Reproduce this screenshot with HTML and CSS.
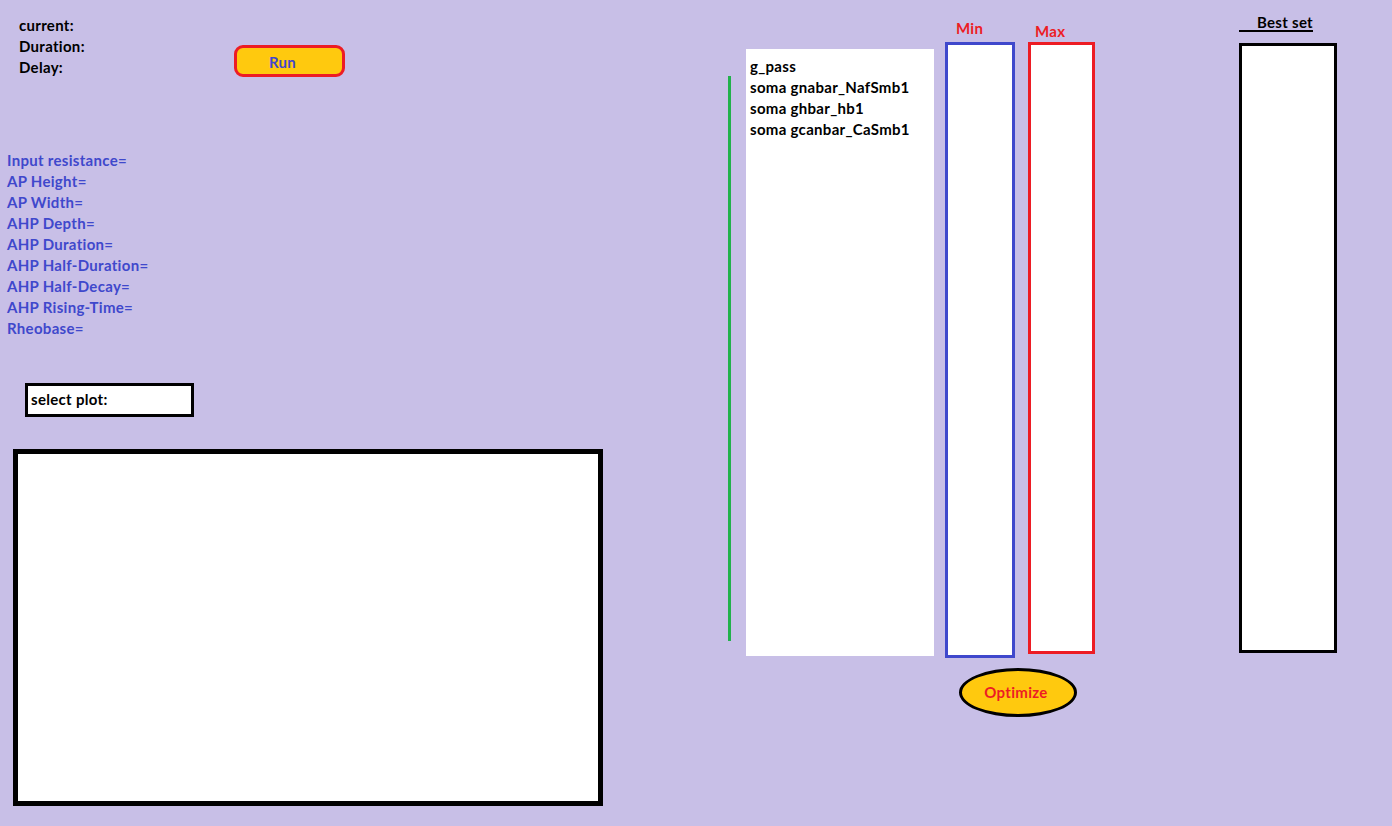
FILE: index.html
```html
<!DOCTYPE html>
<html>
<head>
<meta charset="utf-8">
<link rel="stylesheet" href="styles.css">
</head>
<body>
<div class="page">
  <div class="left">
    <div class="controls">
      <div class="params">
        <div>current:</div>
        <div>Duration:</div>
        <div>Delay:</div>
      </div>
      <button class="run">Run</button>
    </div>
    <div class="metrics">
      <div>Input resistance=</div>
      <div>AP Height=</div>
      <div>AP Width=</div>
      <div>AHP Depth=</div>
      <div>AHP Duration=</div>
      <div>AHP Half-Duration=</div>
      <div>AHP Half-Decay=</div>
      <div>AHP Rising-Time=</div>
      <div>Rheobase=</div>
    </div>
    <div class="select">select plot:</div>
    <div class="plot"></div>
  </div>
  <div class="green"></div>
  <div class="list">
    <div>g_pass</div>
    <div>soma gnabar_NafSmb1</div>
    <div>soma ghbar_hb1</div>
    <div>soma gcanbar_CaSmb1</div>
  </div>
  <div class="ranges">
    <div class="range-cols">
      <div class="col col-min">
        <div class="label label-min">Min</div>
        <div class="box box-min"></div>
      </div>
      <div class="col col-max">
        <div class="label label-max">Max</div>
        <div class="box box-max"></div>
      </div>
    </div>
    <button class="optimize">Optimize</button>
  </div>
  <div class="best">
    <div class="best-label"><span>Best set</span></div>
    <div class="best-box"></div>
  </div>
</div>
</body>
</html>
```

FILE: styles.css
```css
html, body {
  margin: 0;
  padding: 0;
}
body {
  background: #c8bfe7;
  width: 1392px;
  height: 826px;
  overflow: hidden;
  font-family: Lato, "Open Sans", sans-serif;
  font-weight: bold;
  font-size: 15px;
  letter-spacing: 0.3px;
  color: #000;
}
.page {
  display: flex;
  align-items: flex-start;
}
.left {
  width: 728px;
  flex: none;
}
.controls {
  display: flex;
  align-items: flex-start;
  padding: 15px 0 0 19px;
}
.params {
  width: 215px;
  line-height: 21px;
}
.run {
  margin-top: 30px;
  width: 111px;
  height: 32px;
  box-sizing: border-box;
  background: #ffc90e;
  border: 3px solid #ed1c24;
  border-radius: 9px;
  color: #3f48cc;
  font: inherit;
  letter-spacing: inherit;
  padding: 2px 14px 0 0;
}
.metrics {
  margin: 72px 0 0 7px;
  line-height: 21px;
  color: #3f48cc;
}
.select {
  margin: 44px 0 0 25px;
  width: 169px;
  height: 34px;
  box-sizing: border-box;
  border: 3px solid #000;
  background: #fff;
  padding: 3px 0 0 3px;
  line-height: 21px;
}
.plot {
  margin: 32px 0 0 13px;
  width: 590px;
  height: 357px;
  box-sizing: border-box;
  border: 5px solid #000;
  background: #fff;
}
.green {
  flex: none;
  margin-top: 76px;
  width: 3px;
  height: 565px;
  background: #22b14c;
}
.list {
  flex: none;
  margin: 49px 0 0 15px;
  width: 188px;
  height: 607px;
  box-sizing: border-box;
  background: #fff;
  padding: 7px 0 0 4px;
  line-height: 21px;
}
.ranges {
  flex: none;
  margin-left: 11px;
  display: flex;
  flex-direction: column;
  align-items: flex-start;
}
.range-cols {
  display: flex;
  align-items: flex-start;
}
.col {
  display: flex;
  flex-direction: column;
}
.label {
  color: #ed1c24;
  line-height: 20px;
  height: 24px;
}
.label-min {
  padding: 18px 0 0 11px;
}
.label-max {
  padding: 21px 0 0 7px;
  height: 21px;
}
.box {
  box-sizing: border-box;
  background: #fff;
}
.box-min {
  width: 70px;
  height: 616px;
  border: 3px solid #3f48cc;
}
.col-max {
  margin-left: 13px;
}
.box-max {
  width: 67px;
  height: 612px;
  border: 3px solid #ed1c24;
}
.optimize {
  margin: 10px 0 0 14px;
  width: 118px;
  height: 49px;
  box-sizing: border-box;
  border: 3px solid #000;
  border-radius: 50%;
  background: #ffc90e;
  color: #ed1c24;
  font: inherit;
  letter-spacing: inherit;
  padding: 0 4px 2px 0;
}
.best {
  flex: none;
  margin: 13px 0 0 144px;
  display: flex;
  flex-direction: column;
}
.best-label {
  width: 74px;
  height: 19px;
  box-sizing: border-box;
  border-bottom: 2px solid #000;
  text-align: right;
  line-height: 18px;
  margin-bottom: 11px;
}
.best-box {
  width: 98px;
  height: 610px;
  box-sizing: border-box;
  border: 3px solid #000;
  background: #fff;
}
```
